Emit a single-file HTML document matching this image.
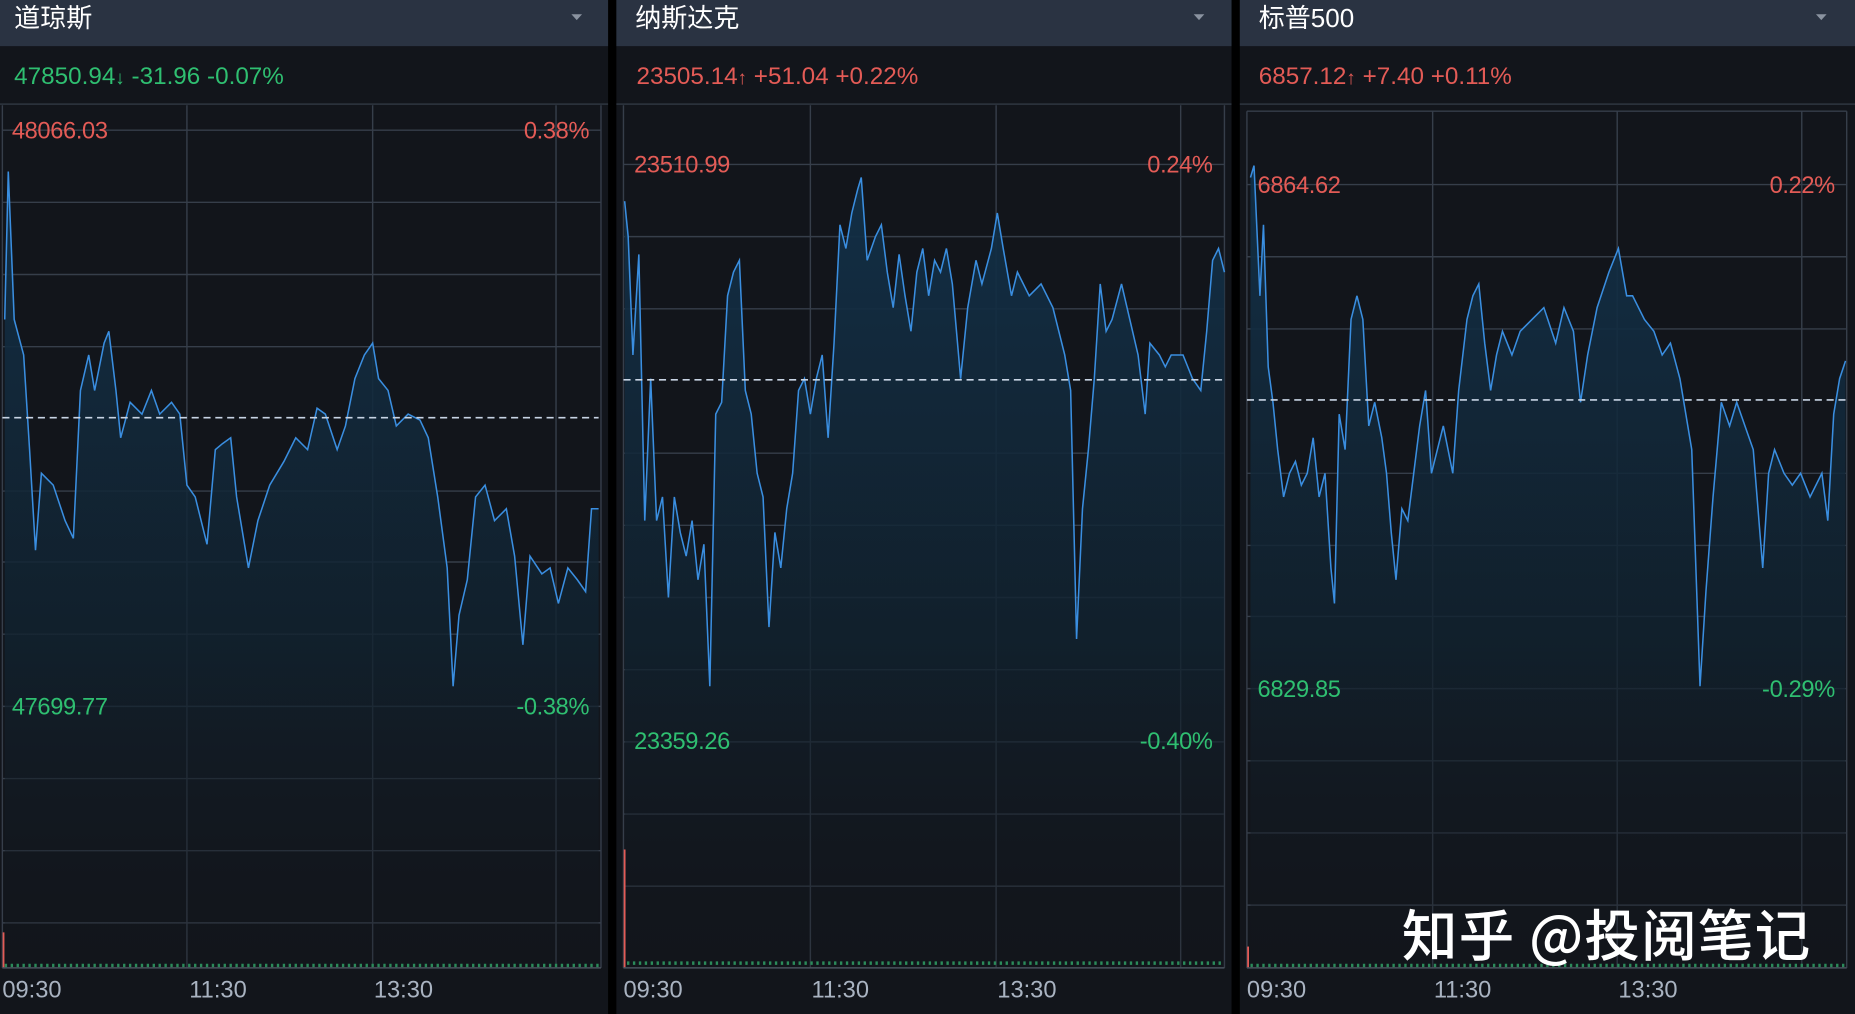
<!DOCTYPE html>
<html><head><meta charset="utf-8"><style>
html,body{margin:0;padding:0;background:#000;width:1855px;height:1014px;overflow:hidden}
svg{display:block}
text{font-family:"Liberation Sans","Noto Sans CJK SC",sans-serif}
</style></head><body>
<svg width="1855" height="1014" viewBox="0 0 1568 857" preserveAspectRatio="none" xmlns="http://www.w3.org/2000/svg">
<defs>
<linearGradient id="g" x1="0" y1="0" x2="0" y2="1">
<stop offset="0" stop-color="#123048" stop-opacity="0.95"/>
<stop offset="0.6" stop-color="#11222f" stop-opacity="0.8"/>
<stop offset="1" stop-color="#12151b" stop-opacity="0.2"/>
</linearGradient>
</defs>
<rect width="1568" height="857" fill="#000"/>
<rect x="0" y="0" width="514" height="857" fill="#12151b"/>
<rect x="521" y="0" width="520" height="857" fill="#12151b"/>
<rect x="1048" y="0" width="520" height="857" fill="#12151b"/>
<rect x="0" y="0" width="514" height="39" fill="#2a3342"/>
<rect x="521" y="0" width="520" height="39" fill="#2a3342"/>
<rect x="1048" y="0" width="520" height="39" fill="#2a3342"/>
<g fill="#fff" font-size="22">
<text x="12" y="23">道琼斯</text>
<text x="537" y="23">纳斯达克</text>
<text x="1064" y="23">标普500</text>
</g>
<g fill="#8a93a0">
<path d="M483 12h9l-4.5 5z"/><path d="M1009 12h9l-4.5 5z"/><path d="M1535 12h9l-4.5 5z"/>
</g>
<g font-size="20.5">
<text x="12" y="71" fill="#2fbf71">47850.94<tspan font-size="16" font-weight="bold">↓</tspan> -31.96 -0.07%</text>
<text x="538" y="71" fill="#e35b56">23505.14<tspan font-size="16" font-weight="bold">↑</tspan> +51.04 +0.22%</text>
<text x="1064" y="71" fill="#e35b56">6857.12<tspan font-size="16" font-weight="bold">↑</tspan> +7.40 +0.11%</text>
</g>
<g stroke="#2a313b" stroke-width="1.5">
<line x1="0" y1="88" x2="514" y2="88"/><line x1="521" y1="88" x2="1041" y2="88"/><line x1="1048" y1="88" x2="1568" y2="88"/>
</g>
<g stroke="#363e4a" stroke-width="1.2" fill="none">
<path d="M2 89V818M158 89V818M315 89V818M470 89V818M508 89V818"/>
<path d="M2 110H508M2 171H508M2 232H508M2 293H508M2 415H508M2 475H508M2 536H508M2 597H508M2 658H508M2 719H508M2 780H508"/>
<path d="M527 89V818M685 89V818M842 89V818M998 89V818M1035 89V818"/>
<path d="M527 139H1035M527 200H1035M527 261H1035M527 383H1035M527 444H1035M527 505H1035M527 566H1035M527 627H1035M527 688H1035M527 749H1035"/>
<path d="M1054 94V818M1211 94V818M1367 94V818M1523 94V818M1561 94V818M1054 94H1561"/>
<path d="M1054 156H1561M1054 217H1561M1054 278H1561M1054 400H1561M1054 461H1561M1054 521H1561M1054 582H1561M1054 643H1561M1054 704H1561M1054 765H1561"/>
</g>
<polygon fill="url(#g)" points="4,818 4,270 7,145 12,270 20,300 25,380 30,465 35,400 45,410 55,440 62,455 68,330 75,300 80,330 88,290 92,280 98,330 102,370 110,340 120,350 128,330 135,350 145,340 152,350 158,410 165,420 175,460 182,380 188,375 195,370 200,420 210,480 218,440 228,410 240,390 250,370 260,380 268,345 275,350 285,380 292,360 300,320 308,300 315,290 320,320 328,330 335,360 345,350 355,355 362,370 370,420 378,480 383,580 388,520 395,490 402,420 410,410 418,440 428,430 435,470 442,545 448,470 458,485 465,480 472,510 480,480 488,490 495,500 500,430 506,430 506,818"/>
<polyline fill="none" stroke="#3a8ee0" stroke-width="1.3" points="4,270 7,145 12,270 20,300 25,380 30,465 35,400 45,410 55,440 62,455 68,330 75,300 80,330 88,290 92,280 98,330 102,370 110,340 120,350 128,330 135,350 145,340 152,350 158,410 165,420 175,460 182,380 188,375 195,370 200,420 210,480 218,440 228,410 240,390 250,370 260,380 268,345 275,350 285,380 292,360 300,320 308,300 315,290 320,320 328,330 335,360 345,350 355,355 362,370 370,420 378,480 383,580 388,520 395,490 402,420 410,410 418,440 428,430 435,470 442,545 448,470 458,485 465,480 472,510 480,480 488,490 495,500 500,430 506,430"/>
<polygon fill="url(#g)" points="528,818 528,170 531,200 535,300 540,215 545,440 550,320 555,440 560,420 565,505 570,420 575,450 580,470 585,440 590,490 595,460 600,580 605,350 610,340 615,250 620,230 625,220 630,330 635,350 640,400 645,420 650,530 655,450 660,480 665,430 670,400 675,330 680,320 685,350 690,320 695,300 700,370 705,290 710,190 715,210 720,180 725,160 728,150 733,220 740,200 745,190 750,230 755,260 760,215 765,250 770,280 775,230 780,210 785,250 790,220 795,230 800,210 805,240 812,320 818,260 825,220 830,240 838,210 843,180 848,210 855,250 860,230 870,250 880,240 890,260 895,280 900,300 905,330 910,540 915,430 920,380 925,320 930,240 935,280 940,270 948,240 955,270 962,300 968,350 972,290 980,300 985,310 990,300 1000,300 1008,320 1015,330 1020,280 1025,220 1030,210 1035,230 1035,818"/>
<polyline fill="none" stroke="#3a8ee0" stroke-width="1.3" points="528,170 531,200 535,300 540,215 545,440 550,320 555,440 560,420 565,505 570,420 575,450 580,470 585,440 590,490 595,460 600,580 605,350 610,340 615,250 620,230 625,220 630,330 635,350 640,400 645,420 650,530 655,450 660,480 665,430 670,400 675,330 680,320 685,350 690,320 695,300 700,370 705,290 710,190 715,210 720,180 725,160 728,150 733,220 740,200 745,190 750,230 755,260 760,215 765,250 770,280 775,230 780,210 785,250 790,220 795,230 800,210 805,240 812,320 818,260 825,220 830,240 838,210 843,180 848,210 855,250 860,230 870,250 880,240 890,260 895,280 900,300 905,330 910,540 915,430 920,380 925,320 930,240 935,280 940,270 948,240 955,270 962,300 968,350 972,290 980,300 985,310 990,300 1000,300 1008,320 1015,330 1020,280 1025,220 1030,210 1035,230"/>
<polygon fill="url(#g)" points="1057,818 1057,150 1060,140 1065,250 1068,190 1072,310 1076,340 1080,380 1085,420 1090,400 1095,390 1100,410 1105,400 1110,370 1115,420 1120,400 1125,480 1128,510 1132,350 1137,380 1142,270 1147,250 1152,270 1157,360 1162,340 1168,370 1172,400 1176,450 1180,490 1185,430 1190,440 1195,400 1200,360 1205,330 1210,400 1215,380 1220,360 1228,400 1233,330 1240,270 1245,250 1250,240 1255,290 1260,330 1265,300 1270,280 1278,300 1285,280 1295,270 1305,260 1315,290 1322,260 1330,280 1336,340 1342,300 1350,260 1360,230 1368,210 1375,250 1380,250 1390,270 1398,280 1405,300 1412,290 1420,320 1425,350 1430,380 1437,580 1442,500 1448,420 1455,340 1462,360 1468,340 1475,360 1482,380 1490,480 1495,400 1500,380 1508,400 1515,410 1522,400 1530,420 1535,410 1540,400 1545,440 1550,350 1555,320 1560,305 1560,818"/>
<polyline fill="none" stroke="#3a8ee0" stroke-width="1.3" points="1057,150 1060,140 1065,250 1068,190 1072,310 1076,340 1080,380 1085,420 1090,400 1095,390 1100,410 1105,400 1110,370 1115,420 1120,400 1125,480 1128,510 1132,350 1137,380 1142,270 1147,250 1152,270 1157,360 1162,340 1168,370 1172,400 1176,450 1180,490 1185,430 1190,440 1195,400 1200,360 1205,330 1210,400 1215,380 1220,360 1228,400 1233,330 1240,270 1245,250 1250,240 1255,290 1260,330 1265,300 1270,280 1278,300 1285,280 1295,270 1305,260 1315,290 1322,260 1330,280 1336,340 1342,300 1350,260 1360,230 1368,210 1375,250 1380,250 1390,270 1398,280 1405,300 1412,290 1420,320 1425,350 1430,380 1437,580 1442,500 1448,420 1455,340 1462,360 1468,340 1475,360 1482,380 1490,480 1495,400 1500,380 1508,400 1515,410 1522,400 1530,420 1535,410 1540,400 1545,440 1550,350 1555,320 1560,305"/>
<g stroke="#c8d4e4" stroke-width="1.3" stroke-dasharray="6,4">
<line x1="2" y1="353" x2="506" y2="353"/><line x1="527" y1="321" x2="1033" y2="321"/><line x1="1054" y1="338" x2="1560" y2="338"/>
</g>
<g stroke-width="1.5">
<line x1="3" y1="788" x2="3" y2="818" stroke="#e35b56"/>
<line x1="528" y1="718" x2="528" y2="818" stroke="#e35b56"/>
<line x1="1055" y1="800" x2="1055" y2="818" stroke="#e35b56"/>
</g>
<g stroke="#2b8a5a" stroke-width="3" stroke-dasharray="2,3">
<line x1="4" y1="816" x2="508" y2="816"/><line x1="530" y1="814" x2="1035" y2="814"/><line x1="1057" y1="816" x2="1561" y2="816"/>
</g>
<g stroke="#4a525c" stroke-width="1.2">
<line x1="2" y1="818" x2="508" y2="818"/><line x1="527" y1="818" x2="1035" y2="818"/><line x1="1054" y1="818" x2="1561" y2="818"/>
</g>
<g font-size="20" letter-spacing="-0.3">
<text x="10" y="117" fill="#e35b56">48066.03</text>
<text x="498" y="117" fill="#e35b56" text-anchor="end">0.38%</text>
<text x="10" y="604" fill="#2fbf71">47699.77</text>
<text x="498" y="604" fill="#2fbf71" text-anchor="end">-0.38%</text>
<text x="536" y="146" fill="#e35b56">23510.99</text>
<text x="1025" y="146" fill="#e35b56" text-anchor="end">0.24%</text>
<text x="536" y="633" fill="#2fbf71">23359.26</text>
<text x="1025" y="633" fill="#2fbf71" text-anchor="end">-0.40%</text>
<text x="1063" y="163" fill="#e35b56">6864.62</text>
<text x="1551" y="163" fill="#e35b56" text-anchor="end">0.22%</text>
<text x="1063" y="589" fill="#2fbf71">6829.85</text>
<text x="1551" y="589" fill="#2fbf71" text-anchor="end">-0.29%</text>
</g>
<g font-size="20" fill="#a9b3c1">
<text x="2" y="843">09:30</text><text x="160" y="843">11:30</text><text x="316" y="843">13:30</text>
<text x="527" y="843">09:30</text><text x="686" y="843">11:30</text><text x="843" y="843">13:30</text>
<text x="1054" y="843">09:30</text><text x="1212" y="843">11:30</text><text x="1368" y="843">13:30</text>
</g>
<text x="1185" y="808" font-size="47" font-weight="500" fill="#fff" letter-spacing="1" style="font-family:'Noto Sans CJK SC','Liberation Sans',sans-serif">知乎 @投阅笔记</text>
</svg>
</body></html>
